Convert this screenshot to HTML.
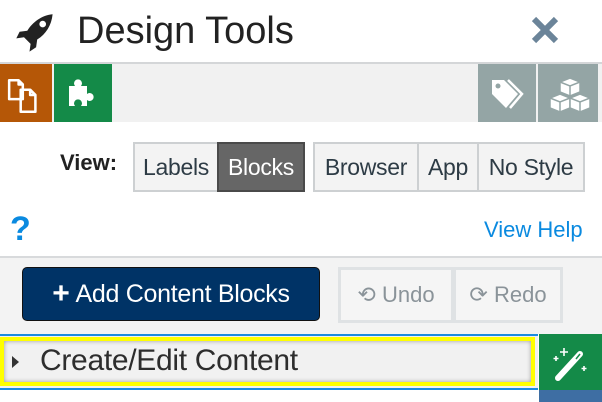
<!DOCTYPE html>
<html><head><meta charset="utf-8"><style>
*{margin:0;padding:0;box-sizing:border-box}
body{width:602px;height:402px;overflow:hidden;background:#fff;font-family:"Liberation Sans",sans-serif;position:relative}
.a{position:absolute}
.btn{position:absolute;top:142px;height:50px;background:#f3f3f3;border:2px solid #cdd0d2;font-size:23px;color:#2d3b45;display:flex;align-items:center;justify-content:center;letter-spacing:-0.3px}
</style></head><body>
<svg class="a" style="left:14px;top:12px" width="42" height="44" viewBox="0 0 36 40"><path d="M34 2 C24 3 16 9 11 17 L4 18 L1 24 L8 23 L14 29 L13 36 L19 32 L20 25 C28 20 33 12 34 2Z" fill="#222"/><circle cx="25" cy="11" r="3" fill="#fff"/></svg>
<div class="a" style="left:77px;top:10px;font-size:38px;color:#222">Design Tools</div>
<svg class="a" style="left:530px;top:15px" width="30" height="30"><path d="M4 4L26 26M26 4L4 26" stroke="#6b8499" stroke-width="6"/></svg>
<div class="a" style="left:0;top:62px;width:602px;height:60px;background:#f1f1f1;border-top:2px solid #d4d6d8"></div>
<div class="a" style="left:0;top:64px;width:52px;height:58px;background:#b55707"></div>
<svg class="a" style="left:6px;top:76px" width="42" height="40" viewBox="0 0 40 36"><path d="M3 3h9l4 4v14H3z M12 3v4h4 M14 12h9l5 5v16H14z M23 12v5h5" fill="none" stroke="#fff" stroke-width="2.4" stroke-linejoin="round"/></svg>
<div class="a" style="left:54px;top:64px;width:58px;height:58px;background:#148a48"></div>
<svg class="a" style="left:65px;top:76px" width="36" height="36" viewBox="0 0 36 36"><path d="M4 10h6a4 4 0 1 1 6 0h6v8a4 4 0 1 1 0 6v6h-6a4 4 0 1 0-6 0H4z" fill="#fff"/></svg>
<div class="a" style="left:478px;top:64px;width:58px;height:58px;background:#94a5a5"></div>
<svg class="a" style="left:490px;top:78px" width="38" height="34" viewBox="0 0 38 34"><path d="M2 2h12l14 14-12 14L2 16z" fill="#fff"/><circle cx="8" cy="8" r="2.5" fill="#94a5a5"/><path d="M18 2l14 14-12 14" fill="none" stroke="#fff" stroke-width="2.5"/></svg>
<div class="a" style="left:538px;top:64px;width:60px;height:58px;background:#94a5a5"></div>
<svg class="a" style="left:548px;top:76px" width="44" height="40" viewBox="0 0 44 40"><g fill="#fff" stroke="#94a5a5" stroke-width="1.5" stroke-linejoin="round"><path d="M22 2l10 4v10l-10 4-10-4V6z"/><path d="M12 18l10 4v10l-10 4-10-4V22z"/><path d="M32 18l10 4v10l-10 4-10-4V22z"/></g><g stroke="#94a5a5" stroke-width="1.5" fill="none"><path d="M12 6l10 4 10-4M22 10v10M2 22l10 4 10-4M12 26v10M22 22l10 4 10-4M32 26v10"/></g></svg>
<div class="a" style="left:60px;top:150px;font-size:22px;font-weight:bold;color:#222">View:</div>
<div class="btn" style="left:133px;width:86px">Labels</div>
<div class="btn" style="left:217px;width:88px;background:#666;border-color:#4a4a4a;color:#fff">Blocks</div>
<div class="btn" style="left:313px;width:106px">Browser</div>
<div class="btn" style="left:417px;width:62px">App</div>
<div class="btn" style="left:477px;width:108px">No Style</div>
<div class="a" style="left:10px;top:210px;font-size:34px;font-weight:bold;color:#0a8ae0">?</div>
<div class="a" style="left:484px;top:217px;font-size:22px;color:#0a8ae0">View Help</div>
<div class="a" style="left:0;top:256px;width:602px;height:78px;background:#f3f3f3;border-top:2px solid #d8dadc"></div>
<div class="a" style="left:22px;top:267px;width:298px;height:54px;background:#003366;border:1px solid #111;border-radius:5px;color:#fff;font-size:25px;display:flex;align-items:center;justify-content:center;letter-spacing:-0.3px"><b style="font-size:30px;margin-right:6px">+</b>Add Content Blocks</div>
<div class="a" style="left:338px;top:267px;width:116px;height:56px;border:3px solid #dfe2e4;background:#f5f5f5;color:#8a9399;font-size:22px;display:flex;align-items:center;justify-content:center">⟲ Undo</div>
<div class="a" style="left:453px;top:267px;width:110px;height:56px;border:3px solid #dfe2e4;background:#f5f5f5;color:#8a9399;font-size:22px;display:flex;align-items:center;justify-content:center">⟳ Redo</div>
<div class="a" style="left:0;top:334px;width:538px;height:56px;background:#f1f1f1;border-top:2px solid #1a8ce0;border-bottom:2px solid #1a8ce0"></div>
<div class="a" style="left:0;top:337px;width:535px;height:49px;border:4px solid #ffff00;box-shadow:inset 0 0 4px #999"></div>
<div class="a" style="left:12px;top:356px;width:0;height:0;border-left:7px solid #333;border-top:6px solid transparent;border-bottom:6px solid transparent"></div>
<div class="a" style="left:40px;top:344px;font-size:30px;color:#2d2d2d;letter-spacing:-0.3px">Create/Edit Content</div>
<div class="a" style="left:539px;top:334px;width:63px;height:56px;background:#148a48"></div>
<div class="a" style="left:539px;top:390px;width:63px;height:12px;background:#3e6ea3"></div>
<svg class="a" style="left:550px;top:346px" width="40" height="36" viewBox="0 0 40 36"><path d="M8 32L30 8" stroke="#fff" stroke-width="6" stroke-linecap="round"/><path d="M26 13l4-5" stroke="#148a48" stroke-width="1.5"/><path d="M14 2v8M10 6h8M6 10v5M3.5 12.5h5M34 20v5M31.5 22.5h5" stroke="#fff" stroke-width="1.6"/></svg>
</body></html>
